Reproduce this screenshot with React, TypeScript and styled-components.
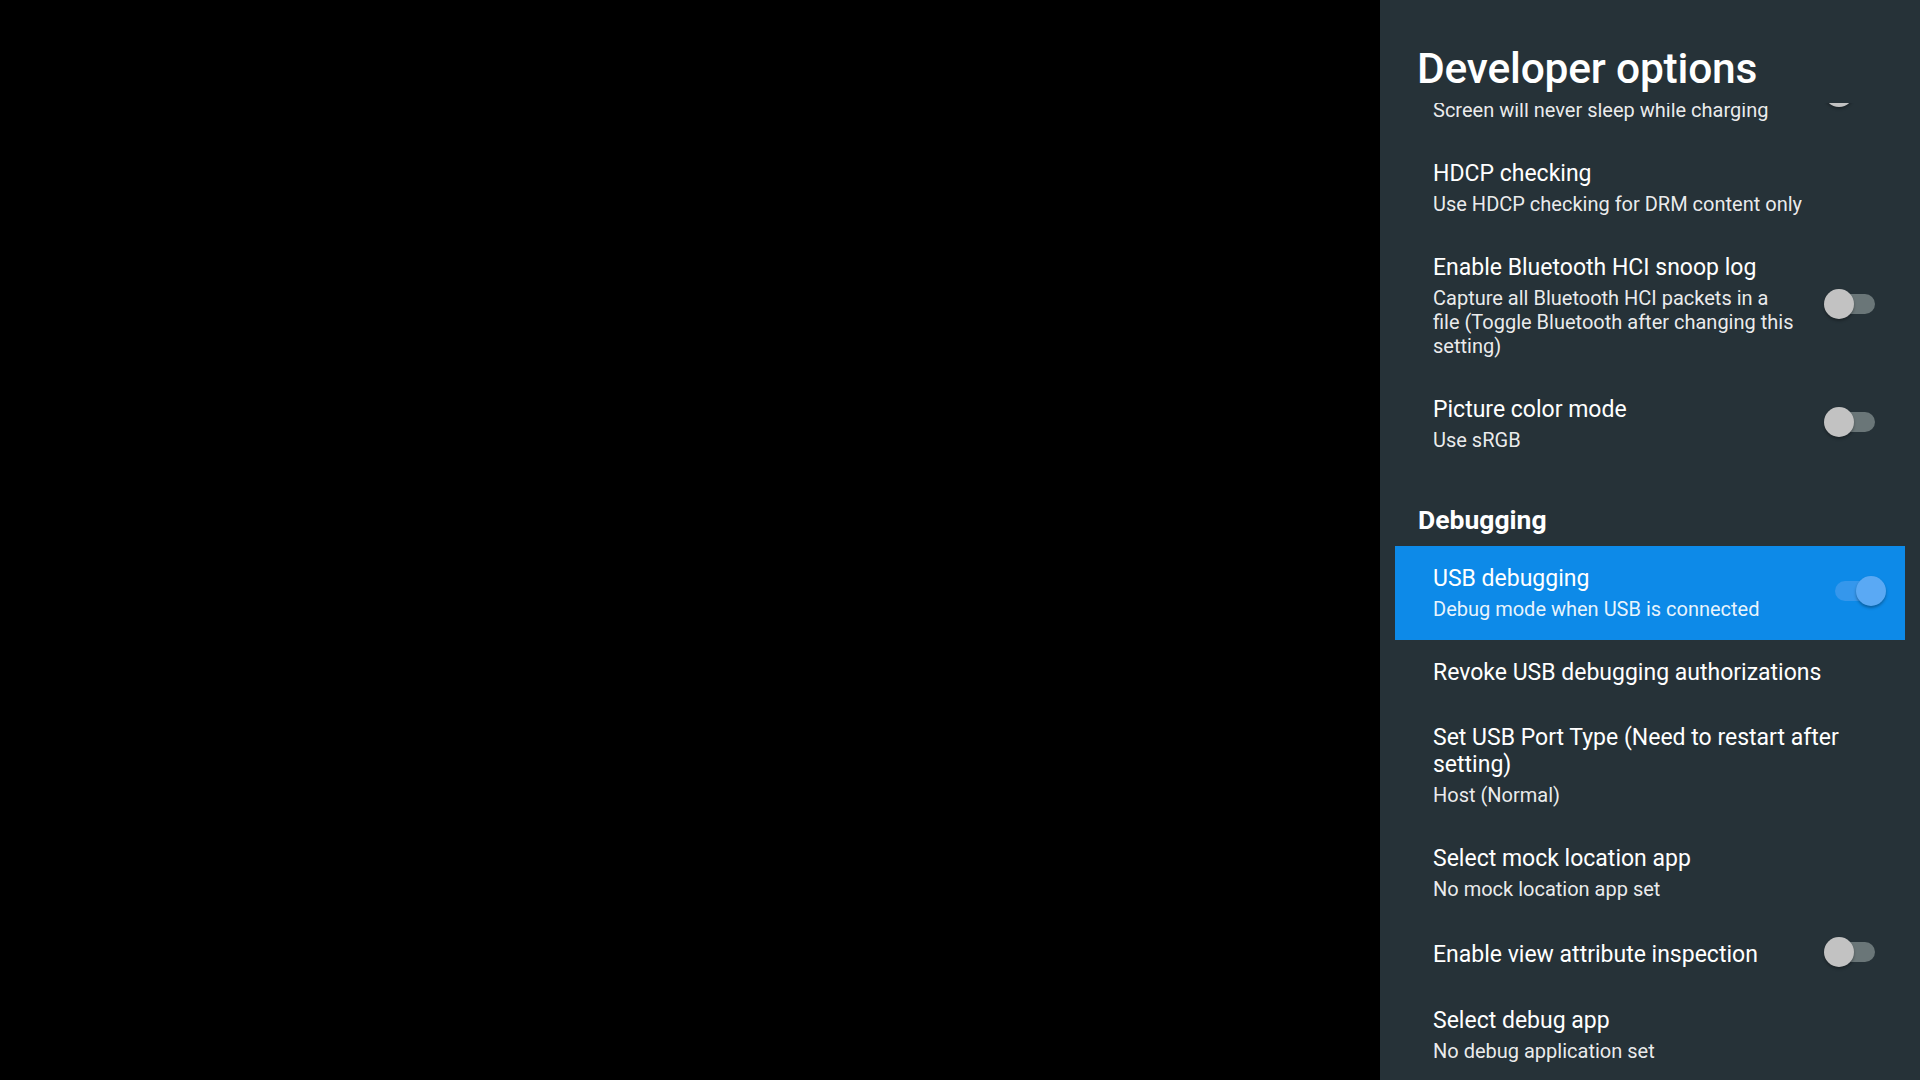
import styled, { createGlobalStyle } from "styled-components";

type Item = {
  title: string;
  summary?: string;
  toggle?: "on" | "off";
  focused?: boolean;
};

const general: Item[] = [
  {
    title: "Stay awake",
    summary: "Screen will never sleep while charging",
    toggle: "off",
  },
  { title: "HDCP checking", summary: "Use HDCP checking for DRM content only" },
  {
    title: "Enable Bluetooth HCI snoop log",
    summary:
      "Capture all Bluetooth HCI packets in a file (Toggle Bluetooth after changing this setting)",
    toggle: "off",
  },
  { title: "Picture color mode", summary: "Use sRGB", toggle: "off" },
];

const debugging: Item[] = [
  {
    title: "USB debugging",
    summary: "Debug mode when USB is connected",
    toggle: "on",
    focused: true,
  },
  { title: "Revoke USB debugging authorizations" },
  {
    title: "Set USB Port Type (Need to restart after setting)",
    summary: "Host (Normal)",
  },
  { title: "Select mock location app", summary: "No mock location app set" },
  { title: "Enable view attribute inspection", toggle: "off" },
  { title: "Select debug app", summary: "No debug application set" },
];

function Switch({ on }: { on: boolean }) {
  return (
    <SwitchBox>
      <Track on={on} />
      <Thumb on={on} />
    </SwitchBox>
  );
}

function Row({ item }: { item: Item }) {
  return (
    <StyledRow focused={!!item.focused}>
      <TextCol>
        <Title>{item.title}</Title>
        {item.summary && <Summary>{item.summary}</Summary>}
      </TextCol>
      {item.toggle && <Switch on={item.toggle === "on"} />}
    </StyledRow>
  );
}

export default function App() {
  return (
    <>
      <GlobalStyle />
      <Screen>
        <Backdrop />
        <Panel>
          <Header>
            <h1>Developer options</h1>
          </Header>
          <Viewport>
            <List>
              {general.map((item, i) => (
                <Row key={i} item={item} />
              ))}
              <Category>Debugging</Category>
              {debugging.map((item, i) => (
                <Row key={i} item={item} />
              ))}
            </List>
          </Viewport>
        </Panel>
      </Screen>
    </>
  );
}

const GlobalStyle = createGlobalStyle`
  html, body {
    margin: 0;
    padding: 0;
    background: #000;
    overflow: hidden;
  }
  * {
    box-sizing: border-box;
  }
`;

const Screen = styled.div`
  display: flex;
  width: 1920px;
  height: 1080px;
  font-family: Roboto, "Noto Sans", sans-serif;
  color: #fff;
`;

const Backdrop = styled.div`
  flex: 1;
  background: #000;
`;

const Panel = styled.aside`
  width: 540px;
  height: 100%;
  background: #263238;
  display: flex;
  flex-direction: column;
`;

const Header = styled.header`
  height: 103px;
  flex-shrink: 0;
  padding: 45px 0 0 37px;
  position: relative;
  z-index: 1;
  background: #263238;

  & > h1 {
    margin: 0;
    font-size: 42.5px;
    font-weight: 500;
    line-height: 48px;
    letter-spacing: -0.2px;
    white-space: nowrap;
  }
`;

const Viewport = styled.div`
  flex: 1;
  overflow: hidden;
`;

const List = styled.div`
  margin: -56px 15px 0;
  display: flex;
  flex-direction: column;
`;

const StyledRow = styled.div<{ focused: boolean }>`
  display: flex;
  align-items: center;
  gap: 26px;
  padding: 19px 30px 19px 38px;
  background: ${(p) => (p.focused ? "#0d8ae8" : "transparent")};
`;

const TextCol = styled.div`
  flex: 1;
  min-width: 0;
`;

const Title = styled.div`
  font-size: 23px;
  line-height: 27px;
  color: #fff;
`;

const Summary = styled.div`
  margin-top: 5px;
  font-size: 20px;
  line-height: 24px;
  color: rgba(255, 255, 255, 0.92);
`;

const Category = styled.div`
  padding: 34px 0 11px 23px;
  font-size: 26.5px;
  font-weight: 700;
  line-height: 30px;
`;

const SwitchBox = styled.div`
  position: relative;
  top: -2px;
  width: 51px;
  height: 30px;
  flex-shrink: 0;
`;

const Track = styled.div<{ on: boolean }>`
  position: absolute;
  top: 5px;
  left: ${(p) => (p.on ? "11px" : "3px")};
  width: 48px;
  height: 20px;
  border-radius: 10px;
  background: ${(p) => (p.on ? "#3597ec" : "#6a7678")};
`;

const Thumb = styled.div<{ on: boolean }>`
  position: absolute;
  top: 0;
  left: ${(p) => (p.on ? "32px" : "0")};
  width: 30px;
  height: 30px;
  border-radius: 50%;
  background: ${(p) => (p.on ? "#5aa9f4" : "#c2c2c2")};
  box-shadow: 0 2px 3px rgba(0, 0, 0, 0.3);
`;
